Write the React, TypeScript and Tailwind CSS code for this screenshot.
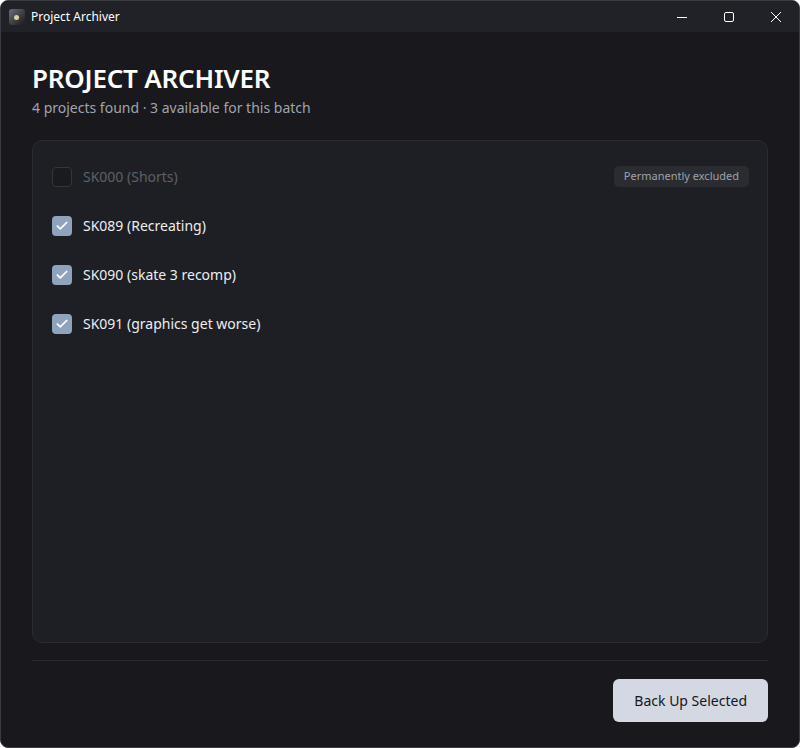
import { Check } from "lucide-react";

const projects = [
  { id: "SK000", name: "SK000 (Shorts)", excluded: true, checked: false },
  { id: "SK089", name: "SK089 (Recreating)", excluded: false, checked: true },
  { id: "SK090", name: "SK090 (skate 3 recomp)", excluded: false, checked: true },
  { id: "SK091", name: "SK091 (graphics get worse)", excluded: false, checked: true },
];

function TitleBar() {
  return (
    <div className="flex h-[31px] items-center bg-[#202228] pl-2 text-white">
      {/* app icon */}
      <div className="relative h-4 w-4 overflow-hidden rounded-[3px] bg-gradient-to-br from-[#6b6f78] to-[#1a1b20]">
        <div className="absolute left-[5px] top-[6px] h-[5px] w-[5px] rounded-full bg-[#d9d0a8]" />
      </div>
      <span className="ml-[6px] text-[12px]">Project Archiver</span>
      <div className="ml-auto flex h-full">
        <button className="flex h-full w-[47px] items-center justify-center">
          <svg width="10" height="10" viewBox="0 0 10 10">
            <path d="M0 5.5h10" stroke="#fff" strokeWidth="1" />
          </svg>
        </button>
        <button className="flex h-full w-[47px] items-center justify-center">
          <svg width="10" height="10" viewBox="0 0 10 10">
            <rect x="0.5" y="0.5" width="9" height="9" rx="1.5" fill="none" stroke="#fff" strokeWidth="1" />
          </svg>
        </button>
        <button className="flex h-full w-[47px] items-center justify-center">
          <svg width="10" height="10" viewBox="0 0 10 10">
            <path d="M0 0L10 10M10 0L0 10" stroke="#fff" strokeWidth="1" />
          </svg>
        </button>
      </div>
    </div>
  );
}

export default function App() {
  return (
    <div
      className="flex h-[748px] w-[800px] flex-col overflow-hidden rounded-lg border border-[#3a3b40] bg-[#18181d]"
      style={{ fontFamily: '"Noto Sans", "Open Sans", sans-serif' }}
    >
      <TitleBar />

      <div className="flex flex-1 flex-col px-[31px] pb-[25px] pt-[28px]">
        <h1 className="text-[26px] font-semibold leading-[36px] tracking-[-0.2px] text-white">
          PROJECT ARCHIVER
        </h1>
        <p className="mt-[1px] text-[14px] text-[#a0a4ad]">
          4 projects found · 3 available for this batch
        </p>

        {/* project list */}
        <div className="mt-[22px] flex-1 rounded-[10px] border border-[#2a2c32] bg-[#1e1f24] px-[19px] pt-[11px]">
          {projects.map((p) => (
            <div key={p.id} className="flex h-[49px] items-center">
              {p.checked ? (
                <div className="flex h-5 w-5 items-center justify-center rounded-[4px] bg-[#8fa3bd]">
                  <Check className="h-[14px] w-[14px] text-white" strokeWidth={3} />
                </div>
              ) : (
                <div className="h-5 w-5 rounded-[4px] border border-[#34363c] bg-[#1a1b1f]" />
              )}
              <span
                className={
                  p.excluded
                    ? "ml-[11px] text-[14px] text-[#5c5f66]"
                    : "ml-[11px] text-[14px] text-[#eceef2]"
                }
              >
                {p.name}
              </span>
              {p.excluded && (
                <span className="ml-auto mr-[-1px] rounded-[5px] bg-[#2a2c31] px-[10px] py-[2px] text-[11px] text-[#9ea2a9]">
                  Permanently excluded
                </span>
              )}
            </div>
          ))}
        </div>

        <div className="mt-[17px] h-px bg-[#2a2b31]" />

        <div className="mt-[18px] flex justify-end">
          <button className="h-[43px] rounded-[6px] bg-[#d3d8e2] px-[21px] text-[14px] text-[#15161a]">
            Back Up Selected
          </button>
        </div>
      </div>
    </div>
  );
}
